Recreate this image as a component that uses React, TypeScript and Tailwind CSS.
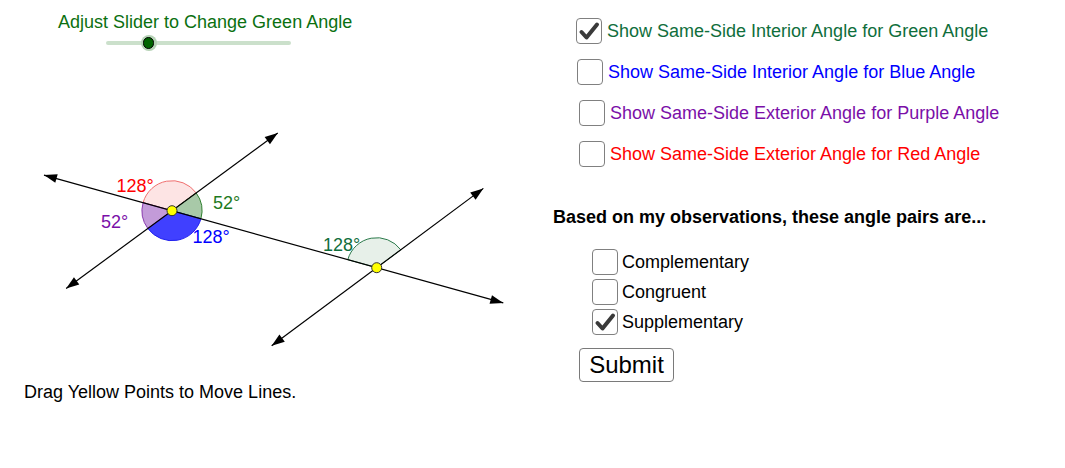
import React from 'react';

type Pt = [number, number];

const FONT = { fontFamily: '"Liberation Sans", Arial, sans-serif' };

const A: Pt = [172, 210.7];
const B: Pt = [376.7, 267.7];

const norm = (v: Pt): Pt => {
  const l = Math.hypot(v[0], v[1]);
  return [v[0] / l, v[1] / l];
};

const u1 = norm([204.7, 57]);
const u2 = norm([211.6, -155.6]);
const u3 = norm([211.6, -157.4]);

const at = (p: Pt, u: Pt, s: number): Pt => [p[0] + u[0] * s, p[1] + u[1] * s];
const f = (p: Pt) => `${p[0].toFixed(2)} ${p[1].toFixed(2)}`;

function sector(c: Pt, from: Pt, to: Pt, r: number) {
  return `M ${f(c)} L ${f(at(c, from, r))} A ${r} ${r} 0 0 1 ${f(at(c, to, r))} Z`;
}

function Arrow({ tip, dir }: { tip: Pt; dir: Pt }) {
  const L = 13;
  const w = 4.5;
  const base = at(tip, dir, -L);
  const n: Pt = [-dir[1], dir[0]];
  const p1 = at(base, n, w);
  const p2 = at(base, n, -w);
  return <polygon points={`${f(tip)} ${f(p1)} ${f(p2)}`} fill="#000" />;
}

function Line({ p, u, s0, s1 }: { p: Pt; u: Pt; s0: number; s1: number }) {
  const a = at(p, u, s0);
  const b = at(p, u, s1);
  const neg: Pt = [-u[0], -u[1]];
  return (
    <g>
      <line x1={a[0]} y1={a[1]} x2={b[0]} y2={b[1]} stroke="#000" strokeWidth={1.2} />
      <Arrow tip={a} dir={neg} />
      <Arrow tip={b} dir={u} />
    </g>
  );
}

function Diagram() {
  const n1: Pt = [-u1[0], -u1[1]];
  const n2: Pt = [-u2[0], -u2[1]];
  const r = 30;
  return (
    <svg width={540} height={240} viewBox="0 120 540 240" className="block" style={FONT}>
      {/* angle sectors at A */}
      <path d={sector(A, n1, u2, r)} fill="#fde4e4" stroke="#f07070" strokeWidth={1} />
      <path d={sector(A, u2, u1, r)} fill="#a8c9a8" stroke="#2f7f2f" strokeWidth={1} />
      <path d={sector(A, u1, n2, r)} fill="#4040ff" stroke="#2020ee" strokeWidth={1} />
      <path d={sector(A, n2, n1, r)} fill="#c39bd9" stroke="#8a3cb0" strokeWidth={1} />
      {/* angle sector at B */}
      <path d={sector(B, n1, u3, r)} fill="#e7f0e9" stroke="#2b7a4b" strokeWidth={1} />

      <Line p={A} u={u1} s0={-132.9} s1={343.9} />
      <Line p={A} u={u2} s0={-131.4} s1={131.3} />
      <Line p={B} u={u3} s0={-130.9} s1={132.9} />

      <circle cx={A[0]} cy={A[1]} r={5} fill="#ffff00" stroke="#333" strokeWidth={1} />
      <circle cx={B[0]} cy={B[1]} r={5} fill="#ffff00" stroke="#333" strokeWidth={1} />

      <text x={116.5} y={192} fontSize={18} fill="#ff0000">128°</text>
      <text x={213} y={208.5} fontSize={18} fill="#1e7a1e">52°</text>
      <text x={101} y={228} fontSize={18} fill="#7a0fa8">52°</text>
      <text x={192.5} y={243} fontSize={18} fill="#0000ff">128°</text>
      <text x={323} y={251} fontSize={18} fill="#0f6e3c">128°</text>
    </svg>
  );
}

function Box({ checked }: { checked?: boolean }) {
  return (
    <span className="flex h-[26px] w-[26px] shrink-0 items-center justify-center rounded-[4px] border-[1.5px] border-[#808080] bg-white">
      {checked && (
        <svg width={22} height={22} viewBox="0 0 22 22">
          <path d="M3.5 12 L8.5 17.5 L19 4.5" fill="none" stroke="#3a3a3a" strokeWidth={4} strokeLinecap="round" strokeLinejoin="round" />
        </svg>
      )}
    </span>
  );
}

const showRows = [
  { text: 'Show Same-Side Interior Angle for Green Angle', color: 'text-[#0f6e3c]', ml: 'ml-[36px]', checked: true },
  { text: 'Show Same-Side Interior Angle for Blue Angle', color: 'text-[#0000ff]', ml: 'ml-[37px]', checked: false },
  { text: 'Show Same-Side Exterior Angle for Purple Angle', color: 'text-[#7a0fa8]', ml: 'ml-[39px]', checked: false },
  { text: 'Show Same-Side Exterior Angle for Red Angle', color: 'text-[#ff0000]', ml: 'ml-[39px]', checked: false },
];

const options = [
  { text: 'Complementary', checked: false },
  { text: 'Congruent', checked: false },
  { text: 'Supplementary', checked: true },
];

export default function App() {
  return (
    <div className="flex h-[468px] w-[1065px] overflow-hidden bg-white text-[18px] leading-[24px] text-black" style={FONT}>
      <div className="flex w-[540px] shrink-0 flex-col">
        <div className="pl-[58px] pt-[10px] text-[#0b7010]">Adjust Slider to Change Green Angle</div>
        <div className="relative ml-[106px] flex h-[18px] w-[185px] items-center">
          <div className="h-[4px] w-full rounded-full bg-[#cbe0cb]" />
          <div className="absolute left-[34.5px] top-[1px] flex h-[16px] w-[16px] items-center justify-center rounded-full bg-[#b5d2b5]">
            <div className="h-[11.5px] w-[11.5px] rounded-full border border-black bg-[#006400]" />
          </div>
        </div>
        <div className="mt-[68px]">
          <Diagram />
        </div>
        <div className="mt-[20px] pl-[24px]">Drag Yellow Points to Move Lines.</div>
      </div>

      <div className="flex flex-1 flex-col pt-[10px]">
        {showRows.map((r) => (
          <div key={r.text} className={`flex h-[41px] items-center gap-[5px] ${r.ml}`}>
            <Box checked={r.checked} />
            <span className={r.color}>{r.text}</span>
          </div>
        ))}
        <div className="ml-[13px] mt-[31px] font-bold">Based on my observations, these angle pairs are...</div>
        <div className="ml-[52px] mt-[18px] flex flex-col">
          {options.map((o) => (
            <div key={o.text} className="flex h-[30px] items-center gap-[4px]">
              <Box checked={o.checked} />
              <span>{o.text}</span>
            </div>
          ))}
        </div>
        <button
          type="button"
          className="ml-[39px] mt-[11px] flex h-[34px] w-[95px] items-center justify-center rounded-[4px] border-[1.5px] border-[#7a7a7a] bg-white text-[24px] leading-none text-black"
        >
          Submit
        </button>
      </div>
    </div>
  );
}
